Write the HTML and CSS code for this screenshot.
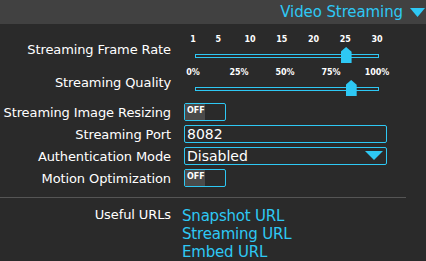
FILE: index.html
```html
<!DOCTYPE html>
<html>
<head>
<meta charset="utf-8">
<link rel="stylesheet" href="styles.css">
</head>
<body>
<div class="header">
  <span class="title">Video Streaming</span>
  <svg class="caret" width="15" height="10" viewBox="0 0 15 10"><polygon points="0,0 15,0 7.5,9" fill="#2ec8f4"/></svg>
</div>
<div class="form">
  <div class="row slider-row">
    <div class="label">Streaming Frame Rate</div>
    <div class="control">
      <div class="ticks">
        <span style="left:0%">1</span>
        <span style="left:13.79%">5</span>
        <span style="left:31.03%">10</span>
        <span style="left:48.28%">15</span>
        <span style="left:65.52%">20</span>
        <span style="left:82.76%">25</span>
        <span style="left:100%">30</span>
      </div>
      <div class="track"><div class="thumb" style="left:82.2%"></div></div>
    </div>
  </div>
  <div class="row slider-row last-slider">
    <div class="label">Streaming Quality</div>
    <div class="control">
      <div class="ticks">
        <span style="left:0%">0%</span>
        <span style="left:25%">25%</span>
        <span style="left:50%">50%</span>
        <span style="left:75%">75%</span>
        <span style="left:100%">100%</span>
      </div>
      <div class="track"><div class="thumb" style="left:85%"></div></div>
    </div>
  </div>
  <div class="row">
    <div class="label">Streaming Image Resizing</div>
    <div class="control"><div class="toggle"><span class="off">OFF</span></div></div>
  </div>
  <div class="row">
    <div class="label">Streaming Port</div>
    <div class="control"><div class="input">8082</div></div>
  </div>
  <div class="row">
    <div class="label">Authentication Mode</div>
    <div class="control"><div class="input select">Disabled<svg class="sel-caret" width="18" height="10" viewBox="0 0 18 10"><polygon points="0,0 18,0 9,9" fill="#2ec8f4"/></svg></div></div>
  </div>
  <div class="row">
    <div class="label">Motion Optimization</div>
    <div class="control"><div class="toggle"><span class="off">OFF</span></div></div>
  </div>
  <div class="sep"></div>
  <div class="row urls">
    <div class="label">Useful URLs</div>
    <div class="control links">
      <a>Snapshot URL</a>
      <a>Streaming URL</a>
      <a>Embed URL</a>
    </div>
  </div>
</div>
</body>
</html>
```
FILE: styles.css
```css
html, body {
  margin: 0;
  padding: 0;
  background: #2a2a2a;
  font-family: "DejaVu Sans", sans-serif;
  color: #ffffff;
  overflow: hidden;
}
.header {
  height: 24px;
  background: #414141;
  display: flex;
  align-items: center;
  justify-content: flex-end;
  padding-right: 1px;
  gap: 7px;
}
.title {
  color: #2ec8f4;
  font-size: 15px;
  letter-spacing: -0.1px;
}
.caret { margin-top: 1px; }
.form {
  padding-top: 6px;
}
.row {
  display: grid;
  grid-template-columns: 171px 1fr;
  column-gap: 13px;
  align-items: center;
  height: 22px;
}
.label {
  text-align: right;
  font-size: 13px;
  letter-spacing: -0.1px;
  white-space: nowrap;
}
.slider-row { height: 33px; align-items: start; }
.slider-row .label { padding-top: 12px; }
.last-slider { margin-bottom: 5px; }
.control { position: relative; }
.ticks {
  position: relative;
  height: 14px;
  margin-left: 9px;
  width: 184px;
  font-size: 8px;
  font-weight: bold;
  line-height: 10px;
}
.ticks span {
  position: absolute;
  top: 5px;
  transform: translateX(-50%);
}
.track {
  position: relative;
  margin-left: 11px;
  width: 182px;
  height: 2px;
  border: 1px solid #2ec8f4;
  margin-top: 10px;
}
.thumb {
  position: absolute;
  top: -8px;
  width: 11px;
  height: 16px;
  margin-left: -5px;
  background: #2ec8f4;
  clip-path: polygon(50% 0, 100% 30%, 100% 100%, 0 100%, 0 30%);
}
.toggle {
  width: 42px;
  height: 18px;
  border: 1px solid #2ec8f4;
  border-radius: 2px;
  box-sizing: border-box;
  display: flex;
}
.toggle .off {
  width: 20px;
  height: 100%;
  background: #4a4a4a;
  font-size: 8px;
  font-weight: bold;
  line-height: 14px;
  padding-left: 2px;
  box-sizing: border-box;
}
.input {
  width: 203px;
  height: 18px;
  box-sizing: border-box;
  border: 1px solid #2ec8f4;
  border-radius: 2px;
  font-size: 14px;
  line-height: 16px;
  padding-left: 2px;
  display: flex;
  align-items: center;
  justify-content: space-between;
}
.select { padding-right: 3px; }
.sep {
  height: 1px;
  background: #555555;
  width: 406px;
  margin: 8px 0 9px;
}
.urls { align-items: start; height: auto; }
.urls .control { margin-left: -2px; }
.links {
  display: flex;
  flex-direction: column;
}
.links a {
  color: #2ec8f4;
  font-size: 15px;
  line-height: 18px;
  letter-spacing: -0.2px;
}
```
